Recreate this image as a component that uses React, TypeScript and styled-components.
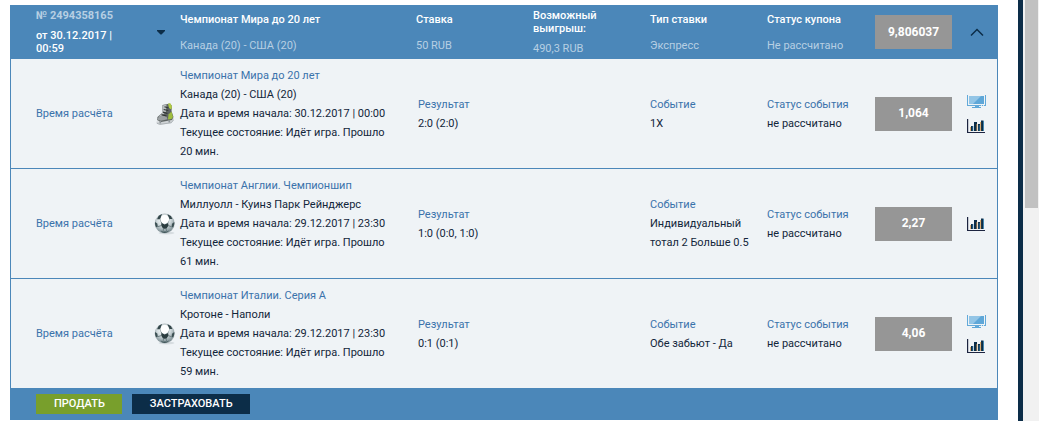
import React from "react";
import styled, { createGlobalStyle } from "styled-components";

const color = {
  blue: "#4b87b9",
  link: "#3a72ab",
  navy: "#0c2d48",
  text: "#12263a",
  pale: "#eff3f6",
  mutedOnBlue: "#b7cfe3",
  grey: "#969696",
  green: "#789f2c",
};

const GlobalStyle = createGlobalStyle`
  * { box-sizing: border-box; }
  body {
    margin: 0;
    background: #fff;
    color: ${color.text};
    font-family: Roboto, "Liberation Sans", sans-serif;
    font-size: 11px;
    line-height: 19px;
  }
`;

const Page = styled.div`
  display: flex;
  min-height: 100vh;
`;

const Main = styled.main`
  flex: 1;
  min-width: 0;
  padding: 5px 20px 1px 10px;
`;

const Divider = styled.div`
  width: 5px;
  background: ${color.navy};
`;

const ScrollTrack = styled.div`
  width: 16px;
  padding: 0 1px 0 2px;
  background: #f1f1f1;
`;

const ScrollThumb = styled.div`
  height: 208px;
  background: #c1c1c1;
`;

const Coupon = styled.section`
  border: solid ${color.blue};
  border-width: 0 1px;
`;

const CouponTable = styled.table`
  width: 100%;
  table-layout: fixed;
  border-spacing: 0;
`;

const Col = styled.col<{ $width?: number }>`
  width: ${(p) => (p.$width ? `${p.$width}px` : "auto")};
`;

const HeadRow = styled.tr`
  height: 54px;
  background: ${color.blue};
  color: #fff;
`;

const HeadCell = styled.th<{ $left?: number }>`
  padding: 0 20px 0 ${(p) => p.$left ?? 0}px;
  text-align: left;
  vertical-align: middle;
  font-weight: 400;
  line-height: 13px;
`;

const HeadPair = styled.div<{ $gap: number }>`
  display: grid;
  gap: ${(p) => p.$gap}px;
`;

const HeadLabel = styled.span`
  font-weight: 500;
`;

const HeadValue = styled.span<{ $strong?: boolean }>`
  color: ${color.mutedOnBlue};
  font-weight: ${(p) => (p.$strong ? 700 : 400)};
`;

const Cell = styled.td<{ $left?: number; $right?: number }>`
  padding: 0 ${(p) => p.$right ?? 0}px 0 ${(p) => p.$left ?? 0}px;
  vertical-align: middle;
`;

const BetRow = styled.tr`
  height: 110px;
  background: ${color.pale};

  > td {
    border-bottom: 1px solid ${color.blue};
  }
`;

const Caption = styled.div`
  color: ${color.link};
`;

const TextLink = styled.a`
  color: ${color.link};
  text-decoration: none;
`;

const Odds = styled.div`
  display: flex;
  align-items: center;
  justify-content: center;
  width: 77px;
  height: 34px;
  background: ${color.grey};
  color: #fff;
  font-size: 12px;
  font-weight: 700;
`;

const IconStack = styled.div`
  display: flex;
  flex-direction: column;
  gap: 10px;
`;

const IconButton = styled.button`
  display: block;
  padding: 0;
  border: 0;
  background: none;
  cursor: pointer;

  svg {
    display: block;
  }
`;

const SportMark = styled.div`
  display: flex;
`;

const Actions = styled.footer`
  display: flex;
  gap: 10px;
  padding: 5px 25px 6px;
  background: ${color.blue};
`;

const ActionButton = styled.button<{ $tone: string }>`
  height: 20px;
  padding: 0 17px 0 18px;
  border: 0;
  background: ${(p) => p.$tone};
  color: #fff;
  font: 500 11px/20px Roboto, "Liberation Sans", sans-serif;
  text-transform: uppercase;
  cursor: pointer;
`;

const CaretIcon = () => (
  <svg width="10" height="5" viewBox="0 0 10 5" aria-hidden="true">
    <path d="M1 0h8v1L5.5 4.5h-1L1 1z" fill={color.navy} />
  </svg>
);

const ChevronIcon = () => (
  <svg width="14" height="9" viewBox="0 0 14 9" aria-hidden="true">
    <path d="M1 7.5 7 1.5l6 6" fill="none" stroke={color.navy} strokeWidth="1.5" />
  </svg>
);

const MonitorIcon = () => (
  <svg width="20" height="14" viewBox="0 0 20 14" aria-hidden="true">
    <path d="M0 0h1v10h17V0h1v11H0z" fill="#62a9d9" />
    <path d="M2 1h15v8H2z" fill="#5fa7d8" />
    <path d="M2 1h12L6 9H2z" fill="#93c5e6" />
    <path d="M8 11h4v1h2v1H5v-1h3z" fill="#5fa7d8" />
    <path d="M14 10h1v1h-1zM16 10h1v1h-1z" fill="#d7e8f3" />
  </svg>
);

const ChartIcon = () => (
  <svg width="20" height="14" viewBox="0 0 20 14" aria-hidden="true">
    <path d="M0 0h1.2v13H18v1H0z" fill="#1c2440" />
    <path d="M4 7h2v5H4zM7 3h3v9H7zM11 5h2v7h-2zM14 1.5h2.5V12H14z" fill={color.navy} />
    <path d="M3.2 8H4v4h-.8zM9.5 5h.8v7h-.8zM13.2 3h.9v9h-.9z" fill="#d79a4e" />
    <path d="M5.6 7h.7v5h-.7zM11.8 6h.7v6h-.7zM16 2h.8v10H16z" fill="#3585b5" />
  </svg>
);

const SkateIcon = () => (
  <svg width="22" height="24" viewBox="0 0 22 24" aria-hidden="true">
    <path d="M2.5 19.5 17 18l2.5-2 .5 1.5-2.5 3.5L6 23l-3.5-1.5z" fill="#cfd3d6" />
    <path d="M8.5 3 16 1.5l2 2.5-.5 5 2 6-1.5 3-11 2-4-2 .5-3L8 11z" fill="#5d6362" />
    <path d="M8.5 3.5 12.5 2.5 12 9.5l-4 4.5-3.5 1L8 11z" fill="#b9bec0" />
    <path d="M14 1.5h2.5L18 4.5l-.7 3-2.3-1.5z" fill="#b2cc45" />
    <path d="m14.5 12.5 3-3 1.5 5.5-1.5 2-3.5.5z" fill="#9fbd3f" />
    <path d="m3.2 16 4.8-2.5 4.5 1 1 2.7-6.5 1.6-3.6-1z" fill="#9ba0a2" />
    <path d="m10.5 4.8 4 1.2M9.7 7.5l4.6 1M9 10.2l4.5 1.3M7.5 12.6l5 1.4" stroke="#303635" strokeWidth="1.2" />
    <path d="m6 19 .5 2.5M15 18l.5 2.5" stroke="#8e9599" strokeWidth="1.6" />
    <path d="m3 21.3 3 1 11.2-1.5 2.3-2.8" fill="none" stroke="#a3a9ad" strokeWidth=".8" />
  </svg>
);

const BallIcon = () => (
  <svg width="22" height="22" viewBox="0 0 22 22" aria-hidden="true">
    <defs>
      <radialGradient id="ballShade" cx="45%" cy="30%" r="70%">
        <stop offset="0" stopColor="#fff" />
        <stop offset=".5" stopColor="#d3dcdf" />
        <stop offset="1" stopColor="#73858b" />
      </radialGradient>
    </defs>
    <ellipse cx="12.5" cy="20" rx="8" ry="1.4" fill="#d6dce0" />
    <circle cx="10.7" cy="10.5" r="9.6" fill="url(#ballShade)" stroke="#8b999d" strokeWidth=".5" />
    <path d="M4.7 2.8 8 1l-.8 2.5-1 2.7L3 6.2zM13.5 1.2l3.4 1.7 1.5 3.2-3-.1-1.4-2.4z" fill="#33464a" />
    <path d="m7.5 9.8 3.2 1.6 3.3-1.6.6 2.6-2.3 3.4H9.2l-2.1-3.2z" fill="#2b3d40" />
    <path d="m1 9 2.3 1.5.5 3.3-1.6.5C1.2 12.6.9 11 1 9zM20.3 9 18 10.7l-.4 3.2 1.5.4c1-1.8 1.4-3.5 1.2-5.3z" fill="#3c5053" />
    <path d="m6.7 17.6 2.3.9 3.7-.1 2.3-.8-2 2c-1.7.6-3.3.5-4.8 0z" fill="#40565a" />
    <path d="m6.2 5.5 1.6 5M15.3 5.5l-1.7 5M7.5 12.5l-3.7 1.2M14 12.5l3.7 1.3M9.5 15.5 9 19M12 15.5l.8 3.3" stroke="#6d7f83" strokeWidth="1" />
    <circle cx="10.8" cy="6.3" r="4.3" fill="#fff" />
  </svg>
);

interface Bet {
  sport: "skate" | "ball";
  league: string;
  teams: string;
  start: string;
  minute: number;
  result: string;
  pick: string;
  odds: string;
  live: boolean;
}

const bets: Bet[] = [
  { sport: "skate", league: "Чемпионат Мира до 20 лет", teams: "Канада (20) - США (20)", start: "30.12.2017 | 00:00", minute: 20, result: "2:0 (2:0)", pick: "1X", odds: "1,064", live: true },
  { sport: "ball", league: "Чемпионат Англии. Чемпионшип", teams: "Миллуолл - Куинз Парк Рейнджерс", start: "29.12.2017 | 23:30", minute: 61, result: "1:0 (0:0, 1:0)", pick: "Индивидуальный тотал 2 Больше 0.5", odds: "2,27", live: false },
  { sport: "ball", league: "Чемпионат Италии. Серия А", teams: "Кротоне - Наполи", start: "29.12.2017 | 23:30", minute: 59, result: "0:1 (0:1)", pick: "Обе забьют - Да", odds: "4,06", live: true },
];

const BetLine = ({ bet }: { bet: Bet }) => (
  <BetRow>
    <Cell $left={25}>
      <Caption>Время расчёта</Caption>
    </Cell>
    <Cell>
      <SportMark>{bet.sport === "skate" ? <SkateIcon /> : <BallIcon />}</SportMark>
    </Cell>
    <Cell $right={25}>
      <TextLink href="#event">{bet.league}</TextLink>
      <div>{bet.teams}</div>
      <div>Дата и время начала: {bet.start}</div>
      <div>Текущее состояние: Идёт игра. Прошло {bet.minute} мин.</div>
    </Cell>
    <Cell $left={2}>
      <Caption>Результат</Caption>
      {bet.result}
    </Cell>
    <Cell />
    <Cell $right={15}>
      <Caption>Событие</Caption>
      {bet.pick}
    </Cell>
    <Cell>
      <Caption>Статус события</Caption>
      не рассчитано
    </Cell>
    <Cell>
      <Odds>{bet.odds}</Odds>
    </Cell>
    <Cell>
      <IconStack>
        {bet.live && (
          <IconButton type="button" aria-label="Трансляция">
            <MonitorIcon />
          </IconButton>
        )}
        <IconButton type="button" aria-label="Статистика">
          <ChartIcon />
        </IconButton>
      </IconStack>
    </Cell>
  </BetRow>
);

interface SummaryProps {
  label: string;
  value: string;
  gap?: number;
}

const Summary = ({ label, value, gap = 13 }: SummaryProps) => (
  <HeadCell scope="col">
    <HeadPair $gap={gap}>
      <HeadLabel>{label}</HeadLabel>
      <HeadValue>{value}</HeadValue>
    </HeadPair>
  </HeadCell>
);

export default function App() {
  return (
    <Page>
      <GlobalStyle />
      <Main>
        <Coupon>
          <CouponTable>
            <colgroup>
              <Col $width={143} />
              <Col $width={26} />
              <Col />
              <Col $width={117} />
              <Col $width={117} />
              <Col $width={117} />
              <Col $width={108} />
              <Col $width={92} />
              <Col $width={30} />
            </colgroup>
            <thead>
              <HeadRow>
                <HeadCell scope="col" $left={25}>
                  <HeadPair $gap={7}>
                    <HeadValue $strong>№ 2494358165</HeadValue>
                    <HeadLabel>
                      от 30.12.2017 |<br />
                      00:59
                    </HeadLabel>
                  </HeadPair>
                </HeadCell>
                <Cell $left={2}>
                  <IconButton type="button" aria-label="Меню купона">
                    <CaretIcon />
                  </IconButton>
                </Cell>
                <Summary label="Чемпионат Мира до 20 лет" value="Канада (20) - США (20)" />
                <Summary label="Ставка" value="50 RUB" />
                <Summary label="Возможный выигрыш:" value="490,3 RUB" gap={7} />
                <Summary label="Тип ставки" value="Экспресс" />
                <Summary label="Статус купона" value="Не рассчитано" />
                <Cell>
                  <Odds>9,806037</Odds>
                </Cell>
                <Cell $left={3}>
                  <IconButton type="button" aria-label="Свернуть">
                    <ChevronIcon />
                  </IconButton>
                </Cell>
              </HeadRow>
            </thead>
            <tbody>
              {bets.map((bet) => (
                <BetLine key={bet.league} bet={bet} />
              ))}
            </tbody>
          </CouponTable>
          <Actions>
            <ActionButton type="button" $tone={color.green}>Продать</ActionButton>
            <ActionButton type="button" $tone={color.navy}>Застраховать</ActionButton>
          </Actions>
        </Coupon>
      </Main>
      <Divider />
      <ScrollTrack aria-hidden="true">
        <ScrollThumb />
      </ScrollTrack>
    </Page>
  );
}
